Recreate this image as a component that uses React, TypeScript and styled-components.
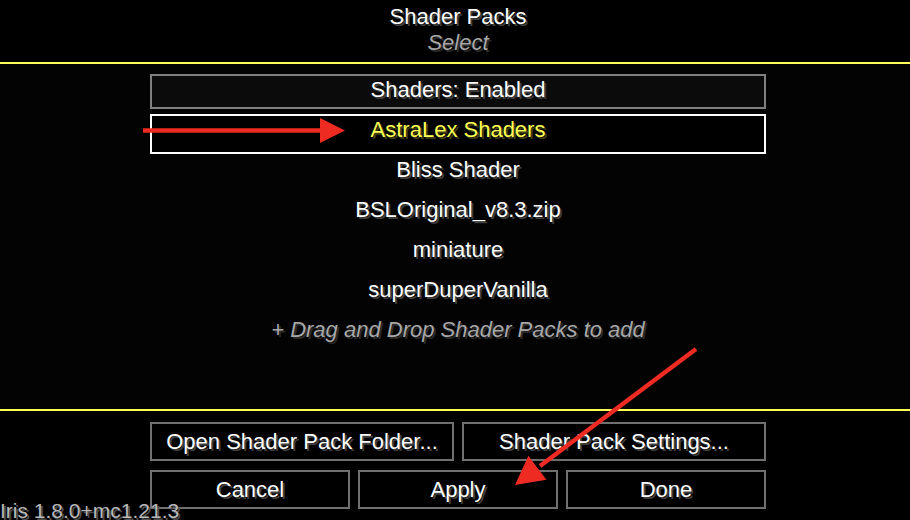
import React from "react";
import styled, { createGlobalStyle, css } from "styled-components";

const GlobalStyle = createGlobalStyle`
  html, body {
    margin: 0;
    padding: 0;
    background: #000;
  }
  * { box-sizing: border-box; }
`;

const Screen = styled.div`
  position: relative;
  width: 910px;
  height: 520px;
  overflow: hidden;
  background: #000;
  display: flex;
  flex-direction: column;
  font-family: "Liberation Sans", Arial, sans-serif;
  font-size: 22px;
  line-height: 20px;
  color: #fff;
  text-shadow: 2px 2px 0 #3f3f3f;
  white-space: nowrap;
`;

const Column = styled.div`
  width: 616px;
  margin-left: 150px;
  display: flex;
  flex-direction: column;
`;

const Header = styled(Column)`
  height: 62px;
  align-items: center;
  padding-top: 7px;
`;

const Title = styled.div`
  height: 20px;
`;

const Subtitle = styled.div`
  height: 20px;
  margin-top: 6px;
  font-style: italic;
  color: #a8a8a8;
  text-shadow: 2px 2px 0 #2a2a2a;
`;

const Divider = styled.div`
  height: 2px;
  flex: none;
  background: #ffff55;
`;

const ListArea = styled.div`
  flex: 1;
  background: #030303;
  padding-top: 10px;
`;

const ToggleButton = styled.div`
  height: 35px;
  border: 2px solid #808080;
  background: #0b0b0b;
  display: flex;
  justify-content: center;
  padding-top: 4px;
`;

const Entry = styled.div<{ $selected?: boolean; $hint?: boolean }>`
  height: 40px;
  border: 2px solid transparent;
  display: flex;
  justify-content: center;
  padding-top: 4px;
  ${(p) =>
    p.$selected &&
    css`
      border-color: #ffffff;
      background: #000;
      color: #ffff55;
      text-shadow: 2px 2px 0 #3f3f15;
    `}
  ${(p) =>
    p.$hint &&
    css`
      font-style: italic;
      color: #a8a8a8;
      text-shadow: 2px 2px 0 #2a2a2a;
    `}
`;

const EntryList = styled.div`
  display: flex;
  flex-direction: column;
  margin-top: 5px;
`;

const Footer = styled(Column)`
  padding-top: 11px;
  height: 109px;
  gap: 9px;
`;

const ButtonRow = styled.div<{ $cols: number }>`
  display: grid;
  grid-template-columns: repeat(${(p) => p.$cols}, 1fr);
  gap: 8px;
`;

const McButton = styled.div`
  height: 39px;
  border: 2px solid #707070;
  background: #000;
  display: flex;
  align-items: center;
  justify-content: center;
`;

const Version = styled.div`
  position: absolute;
  left: 0;
  top: 502px;
  font-size: 21px;
  line-height: 18px;
  color: #b8b8b8;
  text-shadow: 2px 2px 0 #4a4a4a;
`;

const Overlay = styled.svg`
  position: absolute;
  left: 0;
  top: 0;
  pointer-events: none;
`;

const packs = ["Bliss Shader", "BSLOriginal_v8.3.zip", "miniature", "superDuperVanilla"];

export default function App() {
  return (
    <>
      <GlobalStyle />
      <Screen>
        <Header>
          <Title>Shader Packs</Title>
          <Subtitle>Select</Subtitle>
        </Header>
        <Divider />
        <ListArea>
          <Column>
            <ToggleButton>Shaders: Enabled</ToggleButton>
            <EntryList>
              <Entry $selected>AstraLex Shaders</Entry>
              {packs.map((p) => (
                <Entry key={p}>{p}</Entry>
              ))}
              <Entry $hint>+ Drag and Drop Shader Packs to add</Entry>
            </EntryList>
          </Column>
        </ListArea>
        <Divider />
        <Footer>
          <ButtonRow $cols={2}>
            <McButton>Open Shader Pack Folder...</McButton>
            <McButton>Shader Pack Settings...</McButton>
          </ButtonRow>
          <ButtonRow $cols={3}>
            <McButton>Cancel</McButton>
            <McButton>Apply</McButton>
            <McButton>Done</McButton>
          </ButtonRow>
        </Footer>
        <Version>Iris 1.8.0+mc1.21.3</Version>
        <Overlay width="910" height="520" viewBox="0 0 910 520">
          <line x1="143" y1="130.5" x2="324" y2="130.5" stroke="#ee2b22" strokeWidth="4.5" />
          <polygon points="320,118 345,130.5 320,143" fill="#ee2b22" />
          <line x1="696" y1="349" x2="540" y2="466" stroke="#ee2b22" strokeWidth="4.5" />
          <polygon points="515,485 528.4,455.8 546.4,479.8" fill="#ee2b22" />
        </Overlay>
      </Screen>
    </>
  );
}
